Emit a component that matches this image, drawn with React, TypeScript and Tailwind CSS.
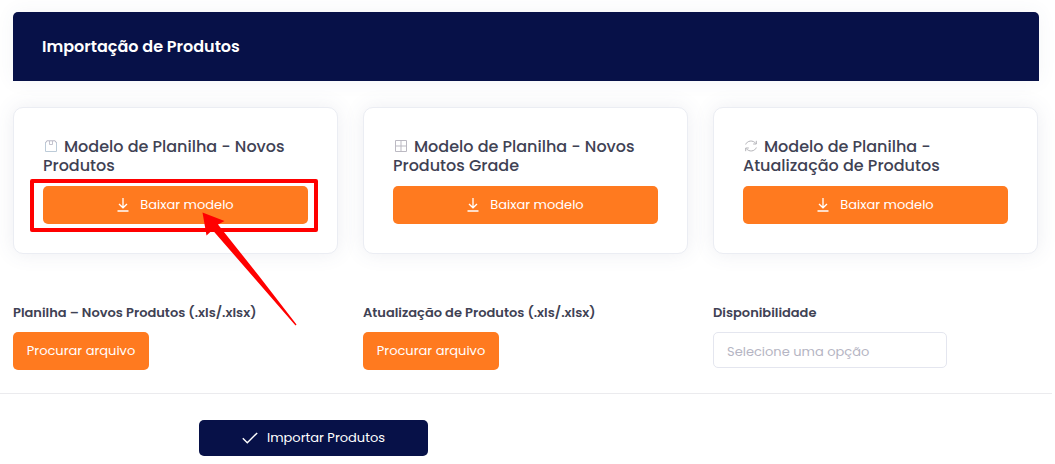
import React, { useState } from "react";

const BoxIcn = () => (
  <svg width="12" height="12" viewBox="0 0 12 12" fill="none" stroke="#b5b5c3" className="inline-block mr-[7px] ml-0.5 align-baseline">
    <path d="M0.5 2.5 V11.5 H11.5 V2.5" stroke="#bccbd8" />
    <path d="M0.5 3 L1.8 0.8 H10.2 L11.5 3" />
    <path d="M4.5 1 V4.5 H7.5 V1" strokeWidth="0.8" />
  </svg>
);

const GridIcn = () => (
  <svg width="12" height="12" viewBox="0 0 12 12" fill="none" stroke="#bbb9c2" className="inline-block mr-[7px] ml-0.5 align-baseline">
    <path d="M0.5 0.5 H11.5 V11.5 H0.5 Z M6 0.5 V11.5 M0.5 6 H11.5" />
  </svg>
);

const RefreshIcn = () => (
  <svg width="12" height="12" viewBox="0 0 12 12" fill="none" stroke="#b3b3b8" className="inline-block mr-[7px] ml-0.5 align-baseline">
    <path d="M0.7 4.5 C2 0.6 8 -0.4 11 3.6 M11.3 0.8 V4 H8.2" />
    <path d="M11.3 7.5 C10 11.4 4 12.4 1 8.4 M0.7 11.2 V8 H3.8" />
  </svg>
);

const DownloadIcn = () => (
  <svg width="12" height="14" viewBox="0 0 12 14" fill="none" stroke="#fff" strokeWidth="1.3">
    <path d="M6 0 V9.5 M2 6 L6 9.8 L10 6 M0.5 13 H11.5" />
  </svg>
);

const CheckIcn = () => (
  <svg width="16" height="12" viewBox="0 0 16 12" fill="none" stroke="#fff" strokeWidth="1.4">
    <path d="M0.8 6.3 L5.3 10.8 L15.2 0.9" />
  </svg>
);

const models = [
  { id: "novos", title: "Modelo de Planilha - Novos Produtos", icon: <BoxIcn />, highlight: true },
  { id: "grade", title: "Modelo de Planilha - Novos Produtos Grade", icon: <GridIcn /> },
  { id: "atualizacao", title: "Modelo de Planilha - Atualização de Produtos", icon: <RefreshIcn /> },
];

const uploads = [
  { id: "up-novos", label: "Planilha – Novos Produtos (.xls/.xlsx)" },
  { id: "up-atualizacao", label: "Atualização de Produtos (.xls/.xlsx)" },
];

// red frame and arrow pointing at the button
function Highlight() {
  return (
    <>
      <div className="absolute -top-[7px] -right-[10px] -bottom-2 -left-[13px] border-4 border-[#ff0000] rounded-xs pointer-events-none" />
      <svg
        width="96"
        height="116"
        viewBox="0 0 96 116"
        fill="#ff0000"
        className="absolute top-[25px] left-[159px] z-10 pointer-events-none"
      >
        <path d="M0.5 1.5 L22.5 10 L16 13.5 L57 65 L94.5 113.5 L93.5 114.5 L54 69 L10.5 19 L4.5 24.5 Z" />
      </svg>
    </>
  );
}

function ModelCard({ title, icon, highlight }: any) {
  return (
    <div className="bg-white p-[29px] border border-[#ebedf3] rounded-[10px] shadow-[0_0_20px_rgba(76,87,125,0.1)]">
      <h3 className="font-medium text-[#3f4254] text-[16px] leading-[19px]">
        {icon}
        {title}
      </h3>
      <div className="relative mt-[11px]">
        <button
          type="button"
          className="flex justify-center items-center gap-[11px] bg-[#ff7a1f] rounded-[5px] w-full h-[38px] text-[13px] text-white"
        >
          <DownloadIcn />
          Baixar modelo
        </button>
        {highlight && <Highlight />}
      </div>
    </div>
  );
}

export default function App() {
  const [availability, setAvailability] = useState("");

  return (
    <main className="bg-white pt-3 pb-2 font-['Poppins','Inter',sans-serif]">
      <div className="pr-4 pl-[13px]">
        <header className="flex items-center bg-[#071148] px-[29px] rounded-t-[5px] h-[69px] shadow-[0_0_20px_rgba(76,87,125,0.06)]">
          <h1 className="font-semibold text-[16px] text-white">Importação de Produtos</h1>
        </header>

        <div className="gap-[25px] grid grid-cols-3 mt-[26px] pr-px">
          {models.map((m) => (
            <ModelCard key={m.id} {...m} />
          ))}
        </div>

        <form className="gap-[25px] grid grid-cols-3 mt-[49px] pr-px">
          {uploads.map((u) => (
            <div key={u.id}>
              <label htmlFor={u.id} className="block font-semibold text-[#3f4254] text-[13px] leading-5 whitespace-nowrap">
                {u.label}
              </label>
              <button id={u.id} type="button" className="bg-[#ff7a1f] mt-[9px] rounded-[5px] w-[136px] h-[38px] text-[13px] text-white">
                Procurar arquivo
              </button>
            </div>
          ))}
          <div>
            <label htmlFor="availability" className="block font-semibold text-[#3f4254] text-[13px] leading-5">
              Disponibilidade
            </label>
            <select
              id="availability"
              value={availability}
              onChange={(e) => setAvailability(e.target.value)}
              className="bg-white mt-[9px] px-[13px] pt-1 border border-[#e4e6ef] rounded-[5px] w-[234px] h-9 text-[#b5b5c3] text-[13px] appearance-none"
            >
              <option value="">Selecione uma opção</option>
            </select>
          </div>
        </form>
      </div>

      <footer className="mt-[23px] mr-[3px] pt-[26px] pl-[199px] border-[#ebebee] border-t">
        <button
          type="button"
          className="flex justify-center items-center gap-[9px] bg-[#071148] rounded-[5px] w-[229px] h-9 text-[13px] text-white"
        >
          <CheckIcn />
          Importar Produtos
        </button>
      </footer>
    </main>
  );
}
